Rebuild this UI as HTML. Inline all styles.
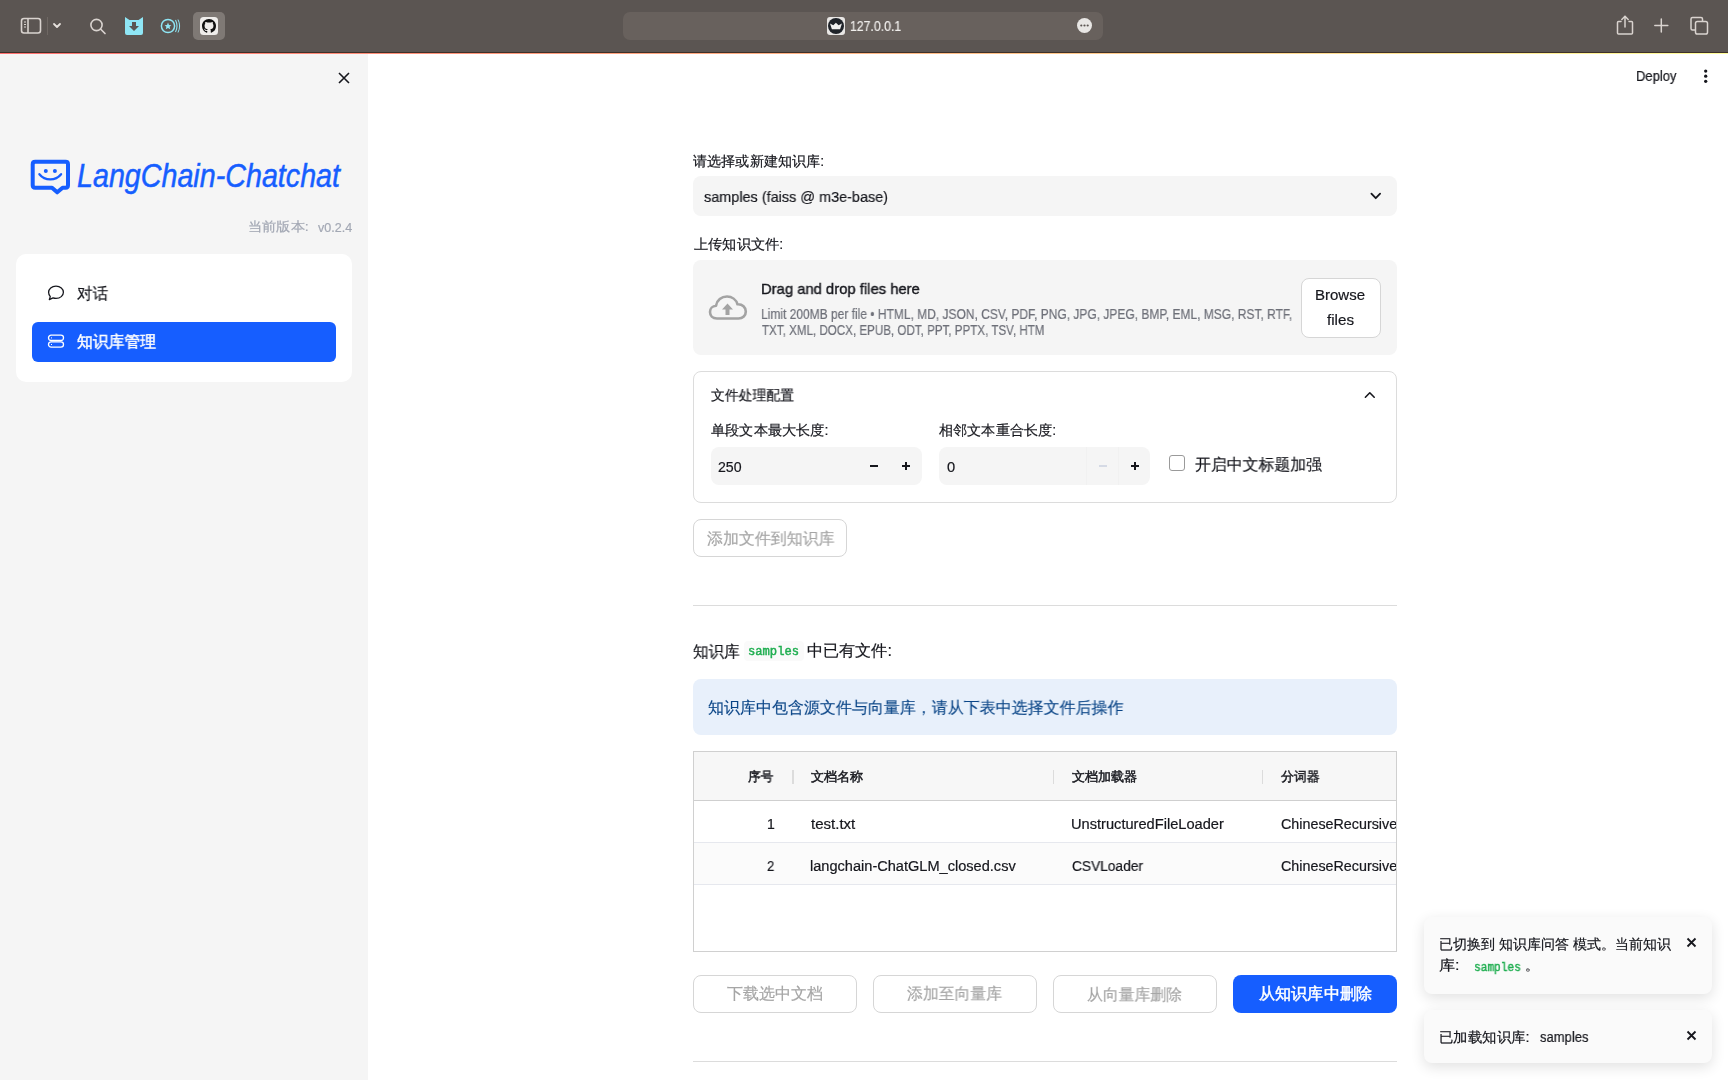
<!DOCTYPE html>
<html><head><meta charset="utf-8">
<style>
*{box-sizing:border-box;margin:0;padding:0}
html,body{width:1728px;height:1080px;overflow:hidden;background:#fff;font-family:"Liberation Sans",sans-serif;color:#16171d}
.abs{position:absolute}
.t{position:absolute;white-space:nowrap;line-height:1;transform-origin:0 0;-webkit-text-stroke:0.2px currentColor;will-change:transform}
#toolbar{position:absolute;left:0;top:0;width:1728px;height:52px;background:#5b5552}
#deco{position:absolute;left:0;top:52px;width:1728px;height:1px;background:#3e312a}
#deco2{position:absolute;left:0;top:53px;width:1728px;height:1px;background:linear-gradient(90deg,#ff4b4b,#fffd80);opacity:.8}
#sidebar{position:absolute;left:0;top:54px;width:368px;height:1026px;background:#f5f5f5}
.btn{position:absolute;border:1px solid #d6d6d6;border-radius:8px;background:#fff}
.mono{font-family:"Liberation Mono",monospace}
</style></head>
<body>
<div id="toolbar">
  <svg class="abs" style="left:0;top:0" width="240" height="52" viewBox="0 0 240 52">
    <g fill="none" stroke="#d9d3cf" stroke-width="1.6">
      <rect x="21.5" y="18.5" width="19" height="14.5" rx="2.5"/>
      <line x1="28" y1="18.5" x2="28" y2="33"/>
    </g>
    <g stroke="#d9d3cf" stroke-width="1.2"><line x1="24" y1="22" x2="26" y2="22"/><line x1="24" y1="24.5" x2="26" y2="24.5"/><line x1="24" y1="27" x2="26" y2="27"/></g>
    <line x1="47.5" y1="17" x2="47.5" y2="35" stroke="#6f6864" stroke-width="1"/>
    <polyline points="54,24 57,27 60,24" fill="none" stroke="#e6e1dd" stroke-width="1.8" stroke-linecap="round" stroke-linejoin="round"/>
    <circle cx="96.5" cy="25" r="5.6" fill="none" stroke="#d9d3cf" stroke-width="1.6"/>
    <line x1="100.5" y1="29" x2="105" y2="33.5" stroke="#d9d3cf" stroke-width="1.7" stroke-linecap="round"/>
    <path d="M125 17 L129.5 20 L138.5 20 L143 17 L143 33 Q143 35 141 35 L127 35 Q125 35 125 33 Z" fill="#8fe6f5"/>
    <path d="M132 22 L136 22 L136 26 L139 26 L134 31 L129 26 L132 26 Z" fill="#5b5552"/>
    <circle cx="168" cy="26" r="6.6" fill="none" stroke="#8fe6f5" stroke-width="1.5"/>
    <path d="M168 22.6 L169 25 L171.4 25.2 L169.6 26.8 L170.2 29.2 L168 27.9 L165.8 29.2 L166.4 26.8 L164.6 25.2 L167 25 Z" fill="#8fe6f5"/>
    <path d="M175.5 20 Q178.5 26 175.5 32" fill="none" stroke="#8fe6f5" stroke-width="1.1"/>
    <path d="M178 19.5 Q181.2 26 178 32.5" fill="none" stroke="#8fe6f5" stroke-width="1"/>
    <rect x="193" y="12" width="32" height="28" rx="5" fill="#7f7975"/>
    <rect x="200" y="17" width="18" height="18" rx="3.5" fill="#efedeb"/>
    <g transform="translate(202,19) scale(0.875)"><path fill="#111" d="M8 0C3.58 0 0 3.58 0 8c0 3.54 2.29 6.53 5.47 7.59.4.07.55-.17.55-.38 0-.19-.01-.82-.01-1.49-2.01.37-2.53-.49-2.69-.94-.09-.23-.48-.94-.82-1.130-.28-.15-.68-.52-.01-.53.63-.01 1.08.58 1.23.82.72 1.21 1.87.87 2.33.66.07-.52.28-.87.51-1.07-1.780-.2-3.64-.89-3.64-3.95 0-.87.31-1.59.82-2.15-.08-.2-.36-1.02.08-2.12 0 0 .67-.21 2.2.82.64-.18 1.32-.27 2-.27.68 0 1.36.09 2 .27 1.53-1.04 2.2-.82 2.2-.82.44 1.1.16 1.92.08 2.12.51.56.82 1.27.82 2.15 0 3.07-1.87 3.75-3.65 3.95.29.25.54.73.54 1.48 0 1.07-.01 1.93-.01 2.2 0 .21.15.46.55.38A8.013 8.013 0 0016 8c0-4.42-3.58-8-8-8z"/></g>
  </svg>
  <div class="abs" style="left:623px;top:12px;width:480px;height:28px;border-radius:7px;background:#68615d"></div>
  <div class="abs" style="left:827px;top:17px;width:18px;height:18px;border-radius:3px;background:#e8e6e4"></div>
  <div class="abs" style="left:828px;top:18px;width:16px;height:16px;border-radius:50%;background:#1f2329"></div>
  <svg class="abs" style="left:827px;top:17px" width="18" height="18" viewBox="0 0 18 18"><path d="M3 6.4 L6.3 8.3 L8.9 5.8 L11.6 8.3 L14.9 6.4 L13.1 12.2 L4.9 12.2 Z" fill="#f0f0f0"/></svg>
  <div class="abs" style="left:1077px;top:18px;width:15px;height:15px;border-radius:50%;background:#e8e6e4"></div>
  <svg class="abs" style="left:1077px;top:18px" width="15" height="15"><circle cx="4.3" cy="7.5" r="1.1" fill="#5b5552"/><circle cx="7.5" cy="7.5" r="1.1" fill="#5b5552"/><circle cx="10.7" cy="7.5" r="1.1" fill="#5b5552"/></svg>
  <svg class="abs" style="left:1600px;top:0" width="128" height="52" viewBox="1600 0 128 52">
    <g fill="none" stroke="#d9d3cf" stroke-width="1.5" stroke-linecap="round" stroke-linejoin="round">
      <path d="M1621 21.5 L1618.5 21.5 Q1617.5 21.5 1617.5 22.5 L1617.5 33 Q1617.5 34 1618.5 34 L1631.5 34 Q1632.5 34 1632.5 33 L1632.5 22.5 Q1632.5 21.5 1631.5 21.5 L1629 21.5"/>
      <line x1="1625" y1="16.5" x2="1625" y2="27"/>
      <polyline points="1621.8,19.5 1625,16.3 1628.2,19.5"/>
      <line x1="1661.3" y1="19" x2="1661.3" y2="32"/>
      <line x1="1654.8" y1="25.5" x2="1667.8" y2="25.5"/>
      <path d="M1695 30 L1692.5 30 Q1691 30 1691 28.5 L1691 19 Q1691 17.5 1692.5 17.5 L1701 17.5 Q1702.5 17.5 1702.5 19 L1702.5 21"/>
      <rect x="1695.5" y="21.5" width="12" height="12.5" rx="1.8"/>
    </g>
  </svg>
</div>
<div id="deco"></div><div id="deco2"></div>

<div id="sidebar"></div>
<svg class="abs" style="left:338px;top:72px" width="12" height="12" viewBox="0 0 12 12"><path d="M1 1 L11 11 M11 1 L1 11" stroke="#16171d" stroke-width="1.6"/></svg>
<svg class="abs" style="left:25px;top:150px" width="60" height="50" viewBox="0 0 60 50">
  <path d="M10.2 11.8 H40.6 Q43 11.8 43 14.2 V35.3 Q43 37.7 40.6 37.7 H37.6 L32.2 42.3 L27 37.7 H10.2 Q7.7 37.7 7.7 35.3 V14.2 Q7.7 11.8 10.2 11.8 Z" fill="none" stroke="#165eff" stroke-width="4" stroke-linejoin="round"/>
  <circle cx="20.8" cy="21" r="2" fill="#165eff"/><circle cx="29.9" cy="21" r="2" fill="#165eff"/>
  <path d="M14.4 24.2 A13.9 13.9 0 0 0 36.1 24.2" fill="none" stroke="#165eff" stroke-width="2.3" stroke-linecap="round"/>
</svg>
<svg class="abs" style="left:70px;top:154px" width="290" height="50" viewBox="0 0 290 50">
  <text x="7" y="33.4" font-family="Liberation Sans" font-style="italic" font-size="33" fill="#165eff" stroke="#165eff" stroke-width="0.5" textLength="263" lengthAdjust="spacingAndGlyphs">LangChain-Chatchat</text>
</svg>
<div class="abs" style="left:16px;top:254px;width:336px;height:128px;border-radius:10px;background:#fff"></div>
<svg class="abs" style="left:47px;top:285px" width="18" height="16" viewBox="0 0 18 16"><path d="M9 1.2 C13.3 1.2 16.4 3.9 16.4 7.3 C16.4 10.7 13.3 13.4 9 13.4 C7.9 13.4 6.9 13.2 6 12.9 L2.3 14.6 L3.3 11.6 C2.2 10.5 1.6 9 1.6 7.3 C1.6 3.9 4.7 1.2 9 1.2 Z" fill="none" stroke="#16171d" stroke-width="1.3" stroke-linejoin="round"/></svg>
<div class="abs" style="left:32px;top:322px;width:304px;height:40px;border-radius:6px;background:#165eff"></div>
<svg class="abs" style="left:47px;top:334px" width="18" height="16" viewBox="0 0 18 16"><rect x="1.5" y="1.2" width="15" height="5.3" rx="2.6" fill="none" stroke="#fff" stroke-width="1.3"/><rect x="1.5" y="7.8" width="15" height="5.3" rx="2.6" fill="none" stroke="#fff" stroke-width="1.3"/><line x1="4" y1="3.9" x2="5" y2="3.9" stroke="#fff" stroke-width="1"/><line x1="4" y1="10.5" x2="5" y2="10.5" stroke="#fff" stroke-width="1"/></svg>

<svg class="abs" style="left:1700px;top:68px" width="12" height="18"><circle cx="5.7" cy="3.1" r="1.65" fill="#16171d"/><circle cx="5.7" cy="8.2" r="1.65" fill="#16171d"/><circle cx="5.7" cy="13.3" r="1.65" fill="#16171d"/></svg>

<div class="abs" style="left:693px;top:176px;width:704px;height:40px;border-radius:8px;background:#f5f5f5"></div>
<svg class="abs" style="left:1368px;top:190px" width="14" height="12"><polyline points="3.4,3.6 7.75,8.2 12.1,3.6" fill="none" stroke="#16171d" stroke-width="1.8" stroke-linecap="round" stroke-linejoin="round"/></svg>
<div class="abs" style="left:693px;top:260px;width:704px;height:95px;border-radius:8px;background:#f5f5f5"></div>
<svg class="abs" style="left:706px;top:290px" width="44" height="34" viewBox="0 0 44 34">
  <path d="M11 28.5 C6.5 28.5 4 25.5 4 22 C4 18.5 6.7 16 10 15.8 C10.8 10.2 15.5 6.5 21 6.5 C26 6.5 30.2 9.7 31.5 14.3 C36.5 14 39.8 17.5 39.8 21.5 C39.8 25.5 36.8 28.5 32.5 28.5 Z" fill="none" stroke="#a3a3a3" stroke-width="2.6" stroke-linejoin="round"/>
  <path d="M21.5 13.5 L27 19.5 L23.5 19.5 L23.5 25 L19.5 25 L19.5 19.5 L16 19.5 Z" fill="#a3a3a3"/>
</svg>
<div class="btn" style="left:1301px;top:278px;width:80px;height:60px"></div>

<div class="abs" style="left:693px;top:371px;width:704px;height:132px;border-radius:8px;border:1px solid #dcdcdc"></div>
<svg class="abs" style="left:1362px;top:388px" width="16" height="12"><polyline points="3.4,9.2 7.8,4.8 12.2,9.2" fill="none" stroke="#16171d" stroke-width="1.6" stroke-linecap="round" stroke-linejoin="round"/></svg>
<div class="abs" style="left:711px;top:447px;width:211px;height:38px;border-radius:8px;background:#f5f5f5"></div>
<svg class="abs" style="left:866px;top:458px" width="50" height="16"><line x1="4" y1="8" x2="12" y2="8" stroke="#16171d" stroke-width="2"/><line x1="36" y1="8" x2="44" y2="8" stroke="#16171d" stroke-width="2"/><line x1="40" y1="4" x2="40" y2="12" stroke="#16171d" stroke-width="2"/></svg>
<div class="abs" style="left:939px;top:447px;width:211px;height:38px;border-radius:8px;background:#f5f5f5"></div>
<svg class="abs" style="left:1095px;top:458px" width="50" height="16"><line x1="4" y1="8" x2="12" y2="8" stroke="#d5dae5" stroke-width="2"/><line x1="36" y1="8" x2="44" y2="8" stroke="#16171d" stroke-width="2"/><line x1="40" y1="4" x2="40" y2="12" stroke="#16171d" stroke-width="2"/></svg>
<div class="abs" style="left:1086px;top:447px;width:1px;height:38px;background:#f1f1f1"></div>
<div class="abs" style="left:1118px;top:447px;width:1px;height:38px;background:#f1f1f1"></div>
<div class="abs" style="left:1169px;top:455px;width:16px;height:16px;border-radius:3px;border:1px solid #9a9a9a;background:#fff"></div>

<div class="btn" style="left:693px;top:519px;width:154px;height:38px"></div>
<div class="abs" style="left:693px;top:605px;width:704px;height:1px;background:#dcdcdc"></div>
<div class="abs" style="left:744px;top:641px;width:60px;height:20px;border-radius:4px;background:#fafafa"></div>
<div class="abs" style="left:693px;top:679px;width:704px;height:56px;border-radius:8px;background:#e8f0fb"></div>

<div class="abs" style="left:693px;top:751px;width:704px;height:201px;border:1px solid #d0d0d0;background:#fff">
  <div class="abs" style="left:0;top:0;width:702px;height:49px;background:#f7f7f7;border-bottom:1px solid #cfcfcf"></div>
  <div class="abs" style="left:0;top:90px;width:702px;height:42px;background:#fbfbfb"></div>
  <div class="abs" style="left:0;top:90px;width:702px;height:1px;background:#e6e8ee"></div>
  <div class="abs" style="left:0;top:132px;width:702px;height:1px;background:#e6e8ee"></div>
  <div class="abs" style="left:98px;top:18px;width:1.5px;height:14px;background:#dcdcdc"></div>
  <div class="abs" style="left:358.5px;top:18px;width:1.5px;height:14px;background:#dcdcdc"></div>
  <div class="abs" style="left:567.5px;top:18px;width:1.5px;height:14px;background:#dcdcdc"></div>
</div>

<div class="btn" style="left:693px;top:975px;width:164px;height:38px"></div>
<div class="btn" style="left:873px;top:975px;width:164px;height:38px"></div>
<div class="btn" style="left:1053px;top:975px;width:164px;height:38px"></div>
<div class="abs" style="left:1233px;top:975px;width:164px;height:38px;border-radius:8px;background:#165eff"></div>
<div class="abs" style="left:693px;top:1061px;width:704px;height:1px;background:#dcdcdc"></div>

<div class="abs" style="left:1424px;top:917px;width:288px;height:77px;border-radius:8px;background:#fafafa;box-shadow:0 4px 14px rgba(0,0,0,0.12)"></div>
<svg class="abs" style="left:1686px;top:937px" width="11" height="11"><path d="M1.5 1.5 L9.5 9.5 M9.5 1.5 L1.5 9.5" stroke="#16171d" stroke-width="1.8"/></svg>
<div class="abs" style="left:1424px;top:1010px;width:288px;height:53px;border-radius:8px;background:#fafafa;box-shadow:0 4px 14px rgba(0,0,0,0.12)"></div>
<svg class="abs" style="left:1686px;top:1030px" width="11" height="11"><path d="M1.5 1.5 L9.5 9.5 M9.5 1.5 L1.5 9.5" stroke="#16171d" stroke-width="1.8"/></svg>

<div class="t" id="url" style="left:850.00px;top:19.15px;font-size:14px;font-family:'Liberation Sans',sans-serif;color:#f0eeec;transform:scaleX(0.8772)">127.0.0.1</div>
<div class="t" id="ver" style="left:248.00px;top:220.30px;font-size:13px;font-family:'Liberation Sans',sans-serif;color:#a3a8b4;transform:scaleX(1.0937)">当前版本:</div>
<div class="t" id="ver2" style="left:317.80px;top:222.22px;font-size:12.5px;font-family:'Liberation Sans',sans-serif;color:#a3a8b4;transform:scaleX(1.0017)">v0.2.4</div>
<div class="t" id="nav1" style="left:76.80px;top:285.60px;font-size:16px;font-family:'Liberation Sans',sans-serif;color:#16171d;transform:scaleX(0.9745)">对话</div>
<div class="t" id="nav2" style="left:77.00px;top:333.60px;font-size:16px;font-family:'Liberation Sans',sans-serif;color:#ffffff;-webkit-text-stroke:0.5px currentColor;transform:scaleX(0.9877)">知识库管理</div>
<div class="t" id="deploy" style="left:1636.00px;top:69.40px;font-size:14px;font-family:'Liberation Sans',sans-serif;color:#16171d;transform:scaleX(0.9302)">Deploy</div>
<div class="t" id="lab1" style="left:693.20px;top:153.60px;font-size:14px;font-family:'Liberation Sans',sans-serif;color:#16171d;transform:scaleX(1.0091)">请选择或新建知识库:</div>
<div class="t" id="sel" style="left:704.20px;top:189.00px;font-size:15px;font-family:'Liberation Sans',sans-serif;color:#16171d;transform:scaleX(0.9632)">samples (faiss @ m3e-base)</div>
<div class="t" id="lab2" style="left:694.00px;top:236.90px;font-size:14px;font-family:'Liberation Sans',sans-serif;color:#16171d;transform:scaleX(1.0152)">上传知识文件:</div>
<div class="t" id="drag" style="left:760.80px;top:281.00px;font-size:15px;font-family:'Liberation Sans',sans-serif;color:#16171d;-webkit-text-stroke:0.4px currentColor;transform:scaleX(0.9869)">Drag and drop files here</div>
<div class="t" id="lim1" style="left:761.00px;top:306.77px;font-size:14px;font-family:'Liberation Sans',sans-serif;color:#6e7079;transform:scaleX(0.8568)">Limit 200MB per file • HTML, MD, JSON, CSV, PDF, PNG, JPG, JPEG, BMP, EML, MSG, RST, RTF,</div>
<div class="t" id="lim2" style="left:762.00px;top:323.18px;font-size:14px;font-family:'Liberation Sans',sans-serif;color:#6e7079;transform:scaleX(0.8289)">TXT, XML, DOCX, EPUB, ODT, PPT, PPTX, TSV, HTM</div>
<div class="t" id="browse" style="left:1315.00px;top:287.15px;font-size:15px;font-family:'Liberation Sans',sans-serif;color:#16171d">Browse</div>
<div class="t" id="files" style="left:1327.00px;top:312.05px;font-size:15px;font-family:'Liberation Sans',sans-serif;color:#16171d;transform:scaleX(1.0137)">files</div>
<div class="t" id="exp" style="left:710.80px;top:388.05px;font-size:14px;font-family:'Liberation Sans',sans-serif;color:#16171d;transform:scaleX(0.9888)">文件处理配置</div>
<div class="t" id="lab3" style="left:711.00px;top:423.25px;font-size:14px;font-family:'Liberation Sans',sans-serif;color:#16171d;transform:scaleX(1.0145)">单段文本最大长度:</div>
<div class="t" id="n250" style="left:718.40px;top:460.05px;font-size:14px;font-family:'Liberation Sans',sans-serif;color:#16171d;transform:scaleX(1.0096)">250</div>
<div class="t" id="lab4" style="left:939.00px;top:423.25px;font-size:14px;font-family:'Liberation Sans',sans-serif;color:#16171d;transform:scaleX(1.0105)">相邻文本重合长度:</div>
<div class="t" id="n0" style="left:947.20px;top:460.05px;font-size:14px;font-family:'Liberation Sans',sans-serif;color:#16171d;transform:scaleX(1.0498)">0</div>
<div class="t" id="chk" style="left:1195.00px;top:456.60px;font-size:16px;font-family:'Liberation Sans',sans-serif;color:#16171d;transform:scaleX(0.9922)">开启中文标题加强</div>
<div class="t" id="addbtn" style="left:706.60px;top:531.05px;font-size:16px;font-family:'Liberation Sans',sans-serif;color:#a6a6a6;transform:scaleX(0.9964)">添加文件到知识库</div>
<div class="t" id="kb1" style="left:693.20px;top:643.65px;font-size:16px;font-family:'Liberation Sans',sans-serif;color:#16171d;transform:scaleX(0.9725)">知识库</div>
<div class="t" id="code1" style="left:748.20px;top:646.15px;font-size:12px;font-family:'Liberation Mono',monospace;color:#1fae50;-webkit-text-stroke:0.45px currentColor;transform:scaleX(1.0117)">samples</div>
<div class="t" id="kb2" style="left:807.00px;top:643.15px;font-size:16px;font-family:'Liberation Sans',sans-serif;color:#16171d;transform:scaleX(1.0069)">中已有文件:</div>
<div class="t" id="info" style="left:708.00px;top:700.10px;font-size:16px;font-family:'Liberation Sans',sans-serif;color:#0a4587;-webkit-text-stroke:0.15px currentColor;transform:scaleX(0.9988)">知识库中包含源文件与向量库，请从下表中选择文件后操作</div>
<div class="t" id="h1" style="left:748.20px;top:770.35px;font-size:13px;font-family:'Liberation Sans',sans-serif;color:#16171d;-webkit-text-stroke:0.45px currentColor;transform:scaleX(0.9755)">序号</div>
<div class="t" id="h2" style="left:811.20px;top:769.85px;font-size:13px;font-family:'Liberation Sans',sans-serif;color:#16171d;-webkit-text-stroke:0.45px currentColor;transform:scaleX(1.0101)">文档名称</div>
<div class="t" id="h3" style="left:1071.80px;top:770.35px;font-size:13px;font-family:'Liberation Sans',sans-serif;color:#16171d;-webkit-text-stroke:0.45px currentColor;transform:scaleX(1.0085)">文档加载器</div>
<div class="t" id="h4" style="left:1281.00px;top:769.85px;font-size:13px;font-family:'Liberation Sans',sans-serif;color:#16171d;-webkit-text-stroke:0.45px currentColor;transform:scaleX(0.9915)">分词器</div>
<div class="t" id="r1c0" style="left:767.20px;top:816.65px;font-size:14px;font-family:'Liberation Sans',sans-serif;color:#16171d;transform:scaleX(0.9626)">1</div>
<div class="t" id="r1c1" style="left:810.80px;top:816.65px;font-size:14px;font-family:'Liberation Sans',sans-serif;color:#16171d;transform:scaleX(1.0737)">test.txt</div>
<div class="t" id="r1c2" style="left:1071.00px;top:816.65px;font-size:14px;font-family:'Liberation Sans',sans-serif;color:#16171d;transform:scaleX(1.0450)">UnstructuredFileLoader</div>
<div class="abs" style="left:0;top:0;width:1396px;height:1080px;overflow:hidden"><div class="t" id="r1c3" style="left:1280.80px;top:816.65px;font-size:14px;font-family:'Liberation Sans',sans-serif;color:#16171d;transform:scaleX(1.0220)">ChineseRecursiveTextSplitter</div></div>
<div class="t" id="r2c0" style="left:767.40px;top:858.50px;font-size:14px;font-family:'Liberation Sans',sans-serif;color:#16171d;transform:scaleX(0.9356)">2</div>
<div class="t" id="r2c1" style="left:809.80px;top:858.50px;font-size:14px;font-family:'Liberation Sans',sans-serif;color:#16171d;transform:scaleX(1.0407)">langchain-ChatGLM_closed.csv</div>
<div class="t" id="r2c2" style="left:1072.00px;top:858.50px;font-size:14px;font-family:'Liberation Sans',sans-serif;color:#16171d;transform:scaleX(0.9803)">CSVLoader</div>
<div class="abs" style="left:0;top:0;width:1396px;height:1080px;overflow:hidden"><div class="t" id="r2c3" style="left:1280.80px;top:858.50px;font-size:14px;font-family:'Liberation Sans',sans-serif;color:#16171d;transform:scaleX(1.0220)">ChineseRecursiveTextSplitter</div></div>
<div class="t" id="b1" style="left:727.00px;top:985.60px;font-size:16px;font-family:'Liberation Sans',sans-serif;color:#a6a6a6">下载选中文档</div>
<div class="t" id="b2" style="left:907.00px;top:986.10px;font-size:16px;font-family:'Liberation Sans',sans-serif;color:#a6a6a6;transform:scaleX(0.9904)">添加至向量库</div>
<div class="t" id="b3" style="left:1087.00px;top:986.60px;font-size:16px;font-family:'Liberation Sans',sans-serif;color:#a6a6a6;transform:scaleX(0.9901)">从向量库删除</div>
<div class="t" id="b4" style="left:1258.80px;top:986.15px;font-size:16px;font-family:'Liberation Sans',sans-serif;color:#ffffff;-webkit-text-stroke:0.5px currentColor;transform:scaleX(1.0099)">从知识库中删除</div>
<div class="t" id="t1" style="left:1439.00px;top:936.80px;font-size:14px;font-family:'Liberation Sans',sans-serif;color:#16171d">已切换到 知识库问答 模式。当前知识</div>
<div class="t" id="t2" style="left:1439.00px;top:958.40px;font-size:14px;font-family:'Liberation Sans',sans-serif;color:#16171d;transform:scaleX(1.1504)">库:</div>
<div class="t" id="t3" style="left:1474.20px;top:962.10px;font-size:12px;font-family:'Liberation Mono',monospace;color:#1fae50;-webkit-text-stroke:0.45px currentColor;transform:scaleX(0.9292)">samples</div>
<div class="t" id="t4" style="left:1525.00px;top:958.00px;font-size:14px;font-family:'Liberation Sans',sans-serif;color:#16171d">。</div>
<div class="t" id="t5" style="left:1439.00px;top:1030.15px;font-size:14px;font-family:'Liberation Sans',sans-serif;color:#16171d;transform:scaleX(1.0310)">已加载知识库:</div>
<div class="t" id="t6" style="left:1540.20px;top:1028.75px;font-size:15px;font-family:'Liberation Sans',sans-serif;color:#16171d;transform:scaleX(0.8685)">samples</div>
</body></html>
